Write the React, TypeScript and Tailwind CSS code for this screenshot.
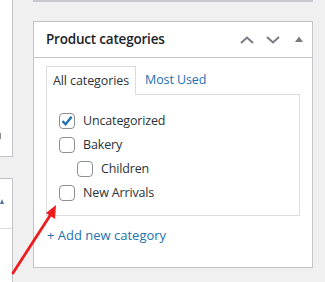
import React from "react";

const font = { fontFamily: '"Open Sans", "Noto Sans", sans-serif' };

function Chevron({ dir }: { dir: "up" | "down" }) {
  return (
    <svg width="14" height="8" viewBox="0 0 14 8" className="block">
      {dir === "up" ? (
        <path d="M1 7 L7 1.5 L13 7" fill="none" stroke="#787c82" strokeWidth="2" />
      ) : (
        <path d="M1 1 L7 6.5 L13 1" fill="none" stroke="#787c82" strokeWidth="2" />
      )}
    </svg>
  );
}

function Check({ checked }: { checked?: boolean }) {
  return (
    <span className="w-4 h-4 shrink-0 rounded-[4px] border border-[#8c8f94] bg-white flex items-center justify-center">
      {checked && (
        <svg width="14" height="14" viewBox="0 0 14 14">
          <path d="M2.5 7.2 L5.6 10.3 L11.6 2.8" fill="none" stroke="#2271b1" strokeWidth="2.4" />
        </svg>
      )}
    </span>
  );
}

function Row({ label, checked, indent }: { label: string; checked?: boolean; indent?: boolean }) {
  return (
    <div className={`h-6 flex items-center gap-2 ${indent ? "pl-[18px]" : ""}`}>
      <Check checked={checked} />
      <span className="text-[12.5px] tracking-[-0.15px] text-[#2c3338]">{label}</span>
    </div>
  );
}

export default function App() {
  return (
    <div className="relative w-[325px] h-[282px] bg-[#f0f0f1] overflow-hidden flex" style={font}>
      {/* left column */}
      <div className="w-[13px] shrink-0 flex flex-col">
        <div className="h-[157px] bg-white border-r border-b border-[#c3c4c7] relative">
          <div className="absolute left-0 top-[133px] w-[1px] h-[6px] bg-[#8c8f94]" />
        </div>
        <div className="h-[21px]" />
        <div className="flex-1 bg-white border-r border-t border-[#c3c4c7] flex flex-col">
          <div className="h-[50px] border-b border-[#dcdcde] relative">
            <svg width="4" height="5" viewBox="0 0 4 5" className="absolute left-0 top-[20px]">
              <path d="M0 5 L2 0 L4 5 Z" fill="#50759a" />
            </svg>
          </div>
        </div>
      </div>

      {/* main */}
      <div className="flex-1 flex flex-col pl-[20px] pr-[12px]">
        <div className="h-[2px] bg-[#c8c9cc]" />
        <div className="mt-[19px] h-[247px] bg-white border border-[#c3c4c7] flex flex-col">
          <div className="h-[36px] border-b border-[#c3c4c7] flex items-center pl-[12px] pr-[9px]">
            <span className="flex-1 text-[13.5px] tracking-[-0.2px] font-semibold text-[#1d2327]">Product categories</span>
            <div className="flex items-center">
              <Chevron dir="up" />
              <div className="w-[12px]" />
              <Chevron dir="down" />
              <div className="w-[15px]" />
              <svg width="8" height="6" viewBox="0 0 8 6" className="block mb-[2px]">
                <path d="M0 6 L4 0.5 L8 6 Z" fill="#787c82" />
              </svg>
            </div>
          </div>
          <div className="pt-[8px] px-[12px]">
            <div className="flex items-end">
              <div className="h-[29px] -mb-[1px] border border-b-0 border-[#dcdcde] bg-white px-[6px] flex items-center text-[12.5px] tracking-[-0.1px] text-[#2c3338] relative z-10">
                All categories
              </div>
              <div className="h-[28px] px-[9px] flex items-center text-[12.5px] tracking-[-0.1px] text-[#2271b1]">Most Used</div>
            </div>
            <div className="border border-[#dcdcde] pt-[14px] pb-[10px] pl-[12px]">
              <Row label="Uncategorized" checked />
              <Row label="Bakery" />
              <Row label="Children" indent />
              <Row label="New Arrivals" />
            </div>
            <div className="mt-[10px] text-[13px] text-[#2271b1] pl-[1px]">+ Add new category</div>
          </div>
        </div>
      </div>

      {/* red arrow */}
      <svg className="absolute left-0 top-0 pointer-events-none" width="325" height="282" viewBox="0 0 325 282">
        <line x1="13" y1="273" x2="51" y2="214" stroke="#ee1c1c" strokeWidth="2.8" strokeLinecap="round" />
        <path d="M56 205 L55 219 L46 213 Z" fill="#ee1c1c" />
      </svg>
    </div>
  );
}
